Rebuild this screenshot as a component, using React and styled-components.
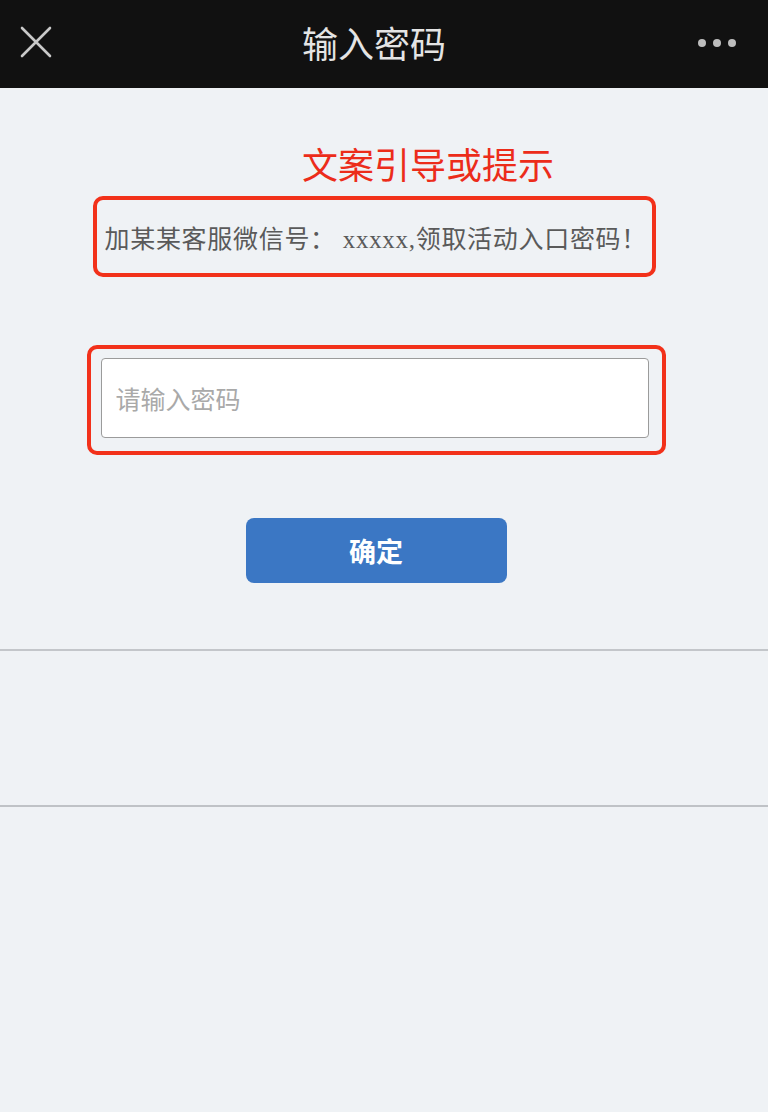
import styled, { createGlobalStyle } from "styled-components"

const GlobalStyle = createGlobalStyle`
  html, body {
    margin: 0;
    padding: 0;
    background: #eff2f5;
  }
  body {
    font-family: "Noto Sans CJK SC", "Noto Sans", sans-serif;
  }
  * { box-sizing: border-box; }
`;

const Page = styled.div`
  min-height: 1112px;
  background: #eff2f5;
`;

const NavBar = styled.header`
  height: 88px;
  background: #111111;
  display: grid;
  grid-template-columns: 1fr auto 1fr;
  align-items: center;
  padding: 0 32px 4px 12px;
`;

const CloseButton = styled.div`
  width: 32px;
  height: 32px;
  margin-left: 8px;
  display: flex;
`;

const NavTitle = styled.h1`
  margin: 0;
  font-size: 36px;
  font-weight: 400;
  color: #e4e4e4;
`;

const MoreButton = styled.div`
  justify-self: end;
  display: flex;
  gap: 7px;
  margin-top: 2px;
`;

const Dot = styled.span`
  width: 8px;
  height: 8px;
  border-radius: 50%;
  background: #bdbdbd;
`;

const Content = styled.main`
  width: 752px;
  display: flex;
  flex-direction: column;
  align-items: center;
  padding-top: 50px;
`;

const Annotation = styled.p`
  align-self: flex-start;
  margin: 0 0 0 302px;
  font-size: 36px;
  line-height: 50px;
  color: #ec2c1a;
`;

const Highlight = styled.div`
  border: 4px solid #f2311a;
  border-radius: 10px;
  width: ${p => p.$w}px;
  height: ${p => p.$h}px;
  margin-top: ${p => p.$top}px;
  margin-right: ${p => p.$shift || 0}px;
`;

const Notice = styled.p`
  margin: 0;
  height: 100%;
  display: flex;
  align-items: center;
  padding-left: 8px;
  font-family: "Liberation Serif", "Noto Sans CJK SC", serif;
  font-size: 25px;
  letter-spacing: 0.7px;
  color: #5a5a5a;
  white-space: nowrap;
`;

const InputWrap = styled.div`
  padding: 9px 13px 12px 10px;
`;

const PasswordInput = styled.input`
  width: 100%;
  height: 80px;
  background: #ffffff;
  border: 1px solid #9b9b9b;
  border-radius: 4px;
  padding: 0 14px;
  font-family: "Noto Sans CJK SC", sans-serif;
  font-size: 25px;
  color: #333;
  outline: none;
  &::placeholder {
    color: #a9a9a9;
  }
`;

const SubmitButton = styled.button`
  margin-top: 63px;
  width: 261px;
  height: 65px;
  border: none;
  border-radius: 8px;
  background: #3b77c4;
  color: #ffffff;
  font-family: "Noto Sans CJK SC", sans-serif;
  font-size: 27px;
  font-weight: 700;
  cursor: pointer;
`;

const EmptySection = styled.section`
  margin-top: 66px;
  height: 158px;
  border-top: 2px solid #c3c6ca;
  border-bottom: 2px solid #bfc2c6;
`;

const CloseIcon = () => (
  <svg width="32" height="32" viewBox="0 0 32 32">
    <path d="M2 2 L30 30 M30 2 L2 30" stroke="#c9c9c9" strokeWidth="2.6" strokeLinecap="round" />
  </svg>
);

const App = () => {
  return (
    <Page>
      <GlobalStyle />
      <NavBar>
        <CloseButton><CloseIcon /></CloseButton>
        <NavTitle>{'输入密码'}</NavTitle>
        <MoreButton>
          <Dot /><Dot /><Dot />
        </MoreButton>
      </NavBar>
      <Content>
        <Annotation>{'文案引导或提示'}</Annotation>
        <Highlight $w={563} $h={81} $top={8} $shift={4}>
          <Notice>{'加某某客服微信号： xxxxx,领取活动入口密码！'}</Notice>
        </Highlight>
        <Highlight $w={579} $h={110} $top={68}>
          <InputWrap>
            <PasswordInput type="password" placeholder="请输入密码" />
          </InputWrap>
        </Highlight>
        <SubmitButton>{'确定'}</SubmitButton>
      </Content>
      <EmptySection />
    </Page>
  )
}

export default App
